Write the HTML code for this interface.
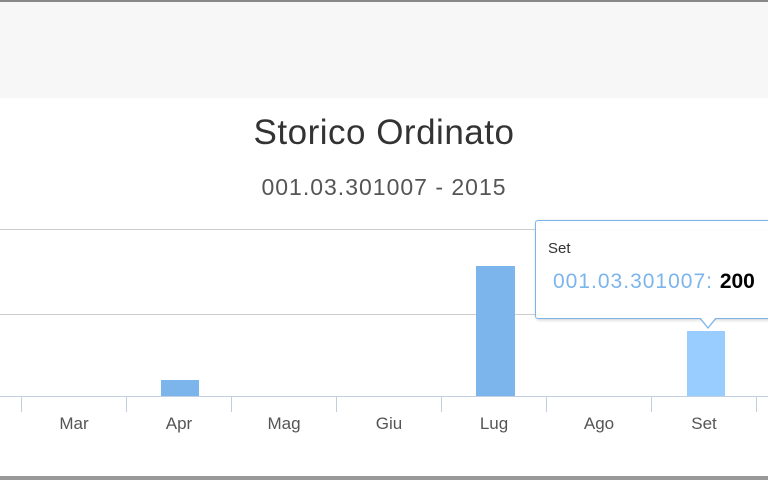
<!DOCTYPE html>
<html><head><style>
body{margin:0;width:768px;height:480px;overflow:hidden;background:#fff;font-family:"Liberation Sans",sans-serif;position:relative}
.a{position:absolute}
.lbl{position:absolute;top:414px;width:80px;text-align:center;font-size:17px;color:#555}
</style></head><body>
<div class="a" style="left:0;top:0;width:768px;height:2px;background:#888"></div>
<div class="a" style="left:0;top:2px;width:768px;height:96px;background:#f7f7f7"></div>
<div class="a" style="left:0;top:113px;width:768px;text-align:center;font-size:35px;color:#333;letter-spacing:0.5px">Storico Ordinato</div>
<div class="a" style="left:0;top:174px;width:768px;text-align:center;font-size:23px;color:#555;letter-spacing:1px">001.03.301007 - 2015</div>
<div class="a" style="left:0;top:229px;width:768px;height:1px;background:#ccc"></div>
<div class="a" style="left:0;top:314px;width:768px;height:1px;background:#ccc"></div>
<div class="a" style="left:0;top:396px;width:768px;height:1px;background:#c0d0e0"></div>
<div class="a" style="left:21px;top:396px;width:1px;height:16px;background:#c0d0e0"></div>
<div class="a" style="left:126px;top:396px;width:1px;height:16px;background:#c0d0e0"></div>
<div class="a" style="left:231px;top:396px;width:1px;height:16px;background:#c0d0e0"></div>
<div class="a" style="left:336px;top:396px;width:1px;height:16px;background:#c0d0e0"></div>
<div class="a" style="left:441px;top:396px;width:1px;height:16px;background:#c0d0e0"></div>
<div class="a" style="left:546px;top:396px;width:1px;height:16px;background:#c0d0e0"></div>
<div class="a" style="left:651px;top:396px;width:1px;height:16px;background:#c0d0e0"></div>
<div class="a" style="left:756px;top:396px;width:1px;height:16px;background:#c0d0e0"></div>
<div class="lbl" style="left:34px">Mar</div>
<div class="lbl" style="left:139px">Apr</div>
<div class="lbl" style="left:244px">Mag</div>
<div class="lbl" style="left:349px">Giu</div>
<div class="lbl" style="left:454px">Lug</div>
<div class="lbl" style="left:559px">Ago</div>
<div class="lbl" style="left:664px">Set</div>
<div class="a" style="left:161px;top:380px;width:38px;height:16px;background:#7cb5ec"></div>
<div class="a" style="left:476px;top:266px;width:39px;height:130px;background:#7cb5ec"></div>
<div class="a" style="left:687px;top:331px;width:38px;height:65px;background:#99ccff"></div>
<div class="a" style="left:535px;top:220px;width:240px;height:97px;background:rgba(255,255,255,0.92);border:1px solid #7cb5ec;border-radius:3px;box-shadow:1px 1px 3px rgba(0,0,0,0.2)"></div>
<div class="a" style="left:699px;top:318px;width:0;height:0;border-left:9px solid transparent;border-right:9px solid transparent;border-top:11px solid #7cb5ec"></div>
<div class="a" style="left:700px;top:317px;width:0;height:0;border-left:8px solid transparent;border-right:8px solid transparent;border-top:10px solid #fff"></div>
<div class="a" style="left:548px;top:240px;font-size:15px;color:#333">Set</div>
<div class="a" style="left:553px;top:270px;font-size:21px;color:#7cb5ec;white-space:nowrap;letter-spacing:1px">001.03.301007: <b style="color:#000;letter-spacing:0">200</b></div>
<div class="a" style="left:0;top:476px;width:768px;height:4px;background:#999"></div>
</body></html>
